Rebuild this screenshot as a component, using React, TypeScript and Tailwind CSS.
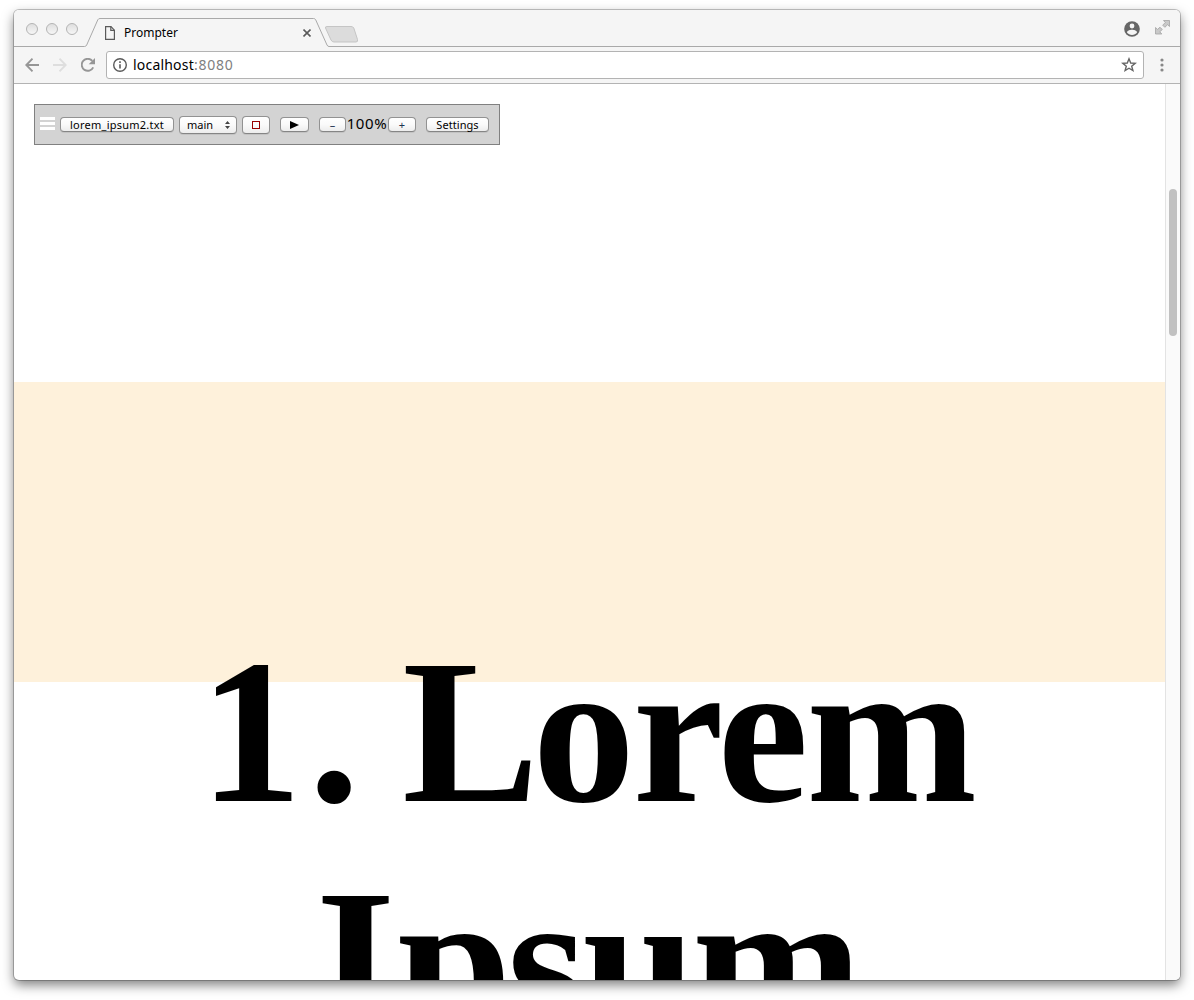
import React from "react";

const MacButton = ({ className, children }: { className: string; children: React.ReactNode }) => (
  <button
    className={`flex shrink-0 items-center justify-center whitespace-nowrap rounded-[4px] border border-[#929292] border-b-[#858585] bg-gradient-to-b from-white via-[#fafafa] to-[#ededed] text-[11px] leading-none text-black shadow-[0_1px_0_rgba(0,0,0,0.08)] ${className}`}
  >
    {children}
  </button>
);

const Light = () => (
  <span className="h-3 w-3 rounded-full border border-[#b4b4b4] bg-gradient-to-b from-[#dfdfdf] to-[#f6f6f6]" />
);

function TabStrip() {
  return (
    <div className="relative flex h-[37px] items-start bg-[#f5f5f5]">
      <svg className="absolute left-0 top-0" width="1166" height="37" viewBox="0 0 1166 37" fill="none">
        <path
          d="M0 36.5H70.500Q72 36.5 72.700 35L83.800 9.800Q84.500 8.500 86 8.500H299.500Q301 8.500 301.700 9.800L313 35Q313.700 36.500 315 36.500H1166"
          stroke="#a9a9a9"
        />
        <path
          d="M313 16.500H337Q339 16.500 339.800 18L343.500 29.500Q344 32 342 32H320Q318 32 317 30L311.500 18Q311 16.500 313 16.500Z"
          fill="#dcdcdc"
          stroke="#c5c5c5"
        />
      </svg>
      <div className="ml-3 mt-[13px] flex gap-2">
        <Light />
        <Light />
        <Light />
      </div>
      <div className="relative ml-[27px] mt-[14px] flex h-[18px] w-[206px] items-center">
        <svg width="10" height="14" viewBox="0 0 10 14" fill="none" stroke="#5a5a5a" strokeWidth="1.2" className="shrink-0">
          <path d="M.6 .6H6L9.400 4.200V13.400H.6Z" />
          <path d="M5.800 .8V4.400H9.400" />
        </svg>
        <span className="ml-[9px] text-[12px] leading-none text-black">Prompter</span>
        <svg className="ml-auto" width="8" height="8" viewBox="0 0 8 8" stroke="#5a5a5a" strokeWidth="1.6">
          <path d="M.5 .5L7.500 7.500M7.500 .5L.5 7.500" />
        </svg>
      </div>
      <div className="ml-auto mr-[10px] mt-[10px] flex items-start">
        <svg className="mt-[1px]" width="16" height="16" viewBox="0 0 16 16">
          <circle cx="8" cy="8" r="7.800" fill="#666" />
          <circle cx="8" cy="5" r="2.400" fill="#f5f5f5" />
          <path d="M3 11.500C3 9.500 6 8.700 8 8.700S13 9.500 13 11.500C12 13 10 14 8 14S4 13 3 11.500Z" fill="#f5f5f5" />
        </svg>
        <svg className="ml-[15px]" width="15" height="15" viewBox="0 0 15 15" fill="#c9c9c9" stroke="#a3a3a3" strokeWidth=".8">
          <path d="M8.500 .5H14.500V6.500L12.600 4.700L9.800 7.300L7.700 5.200L10.300 2.500Z" />
          <path d="M.5 7.500L2.500 9.400L5 7.200L7.300 9.500L4.800 11.800L6.800 14H.5Z" />
        </svg>
      </div>
    </div>
  );
}

function AddressBar() {
  return (
    <div className="flex h-[37px] items-center border-b border-[#b3b3b3] bg-[#f5f5f5] pl-[11px] pr-[16px]">
      <svg width="14" height="14" viewBox="0 0 14 14" fill="none" stroke="#969696" strokeWidth="1.900">
        <path d="M14 7H1.500M7.500 .7L1.300 7L7.500 13.300" />
      </svg>
      <svg className="ml-[14px]" width="14" height="14" viewBox="0 0 14 14" fill="none" stroke="#dedede" strokeWidth="1.900">
        <path d="M0 7H12.500M6.500 .7L12.700 7L6.500 13.300" />
      </svg>
      <svg className="ml-[14px]" width="14" height="14" viewBox="0 0 14 14" fill="none">
        <path d="M12.200 9.300A6 6 0 1 1 11.300 2.900" stroke="#969696" strokeWidth="1.900" />
        <path d="M14 0V6.300H7.700Z" fill="#969696" />
      </svg>
      <div className="ml-[11px] flex h-7 w-[1038px] items-center rounded-[3px] border border-[#b3b3b3] bg-white px-[6px]">
        <svg width="14" height="14" viewBox="0 0 14 14" fill="none">
          <circle cx="7" cy="7" r="6.300" stroke="#5a5a5a" strokeWidth="1.400" />
          <path d="M7 6.200V10.500M7 3.300V4.900" stroke="#5a5a5a" strokeWidth="1.600" />
        </svg>
        <span className="ml-[6px] text-[14px] leading-none tracking-[0.2px] text-black">
          localhost<span className="tracking-[0.75px] text-[#808080]">:8080</span>
        </span>
        <svg className="ml-auto" width="16" height="16" viewBox="0 0 16 16" fill="none" stroke="#666" strokeWidth="1.400">
          <path d="M8 1.800L9.700 6L14.200 6.300L10.700 9.200L11.900 13.600L8 11.200L4.100 13.600L5.300 9.200L1.800 6.300L6.300 6Z" />
        </svg>
      </div>
      <svg className="ml-auto" width="4" height="14" viewBox="0 0 4 14" fill="#888">
        <circle cx="2" cy="2" r="1.600" />
        <circle cx="2" cy="7" r="1.600" />
        <circle cx="2" cy="12" r="1.600" />
      </svg>
    </div>
  );
}

function PrompterControls() {
  return (
    <div className="ml-5 mt-5 flex h-[41px] w-[466px] items-center border border-[#808080] bg-[#d3d3d3] pl-[5px]">
      <div className="flex w-[15px] shrink-0 flex-col gap-[2px] pb-[2px]">
        <span className="h-[3px] bg-white" />
        <span className="h-[3px] bg-white" />
        <span className="h-[3px] bg-white" />
      </div>
      <MacButton className="ml-[5px] h-[15px] w-[114px] tracking-[0.24px]">lorem_ipsum2.txt</MacButton>
      <MacButton className="ml-[5px] h-[18px] w-[58px] pl-px">
        <span>main</span>
        <svg className="ml-3" width="5" height="8" viewBox="0 0 5 8" fill="#444">
          <path d="M2.500 0L5 3H0ZM2.500 8L5 5H0Z" />
        </svg>
      </MacButton>
      <MacButton className="ml-[5px] h-[18px] w-[28px]">
        <span className="h-2 w-2 border border-[#980000]" />
      </MacButton>
      <MacButton className="ml-[10px] h-[15px] w-[29px]">
        <svg width="9" height="8" viewBox="0 0 9 8">
          <path d="M0 0L9 4L0 8Z" />
        </svg>
      </MacButton>
      <MacButton className="ml-[10px] h-[15px] w-[27px]">
        <span className="text-[#1d3550]">–</span>
      </MacButton>
      <span className="flex w-[42px] shrink-0 justify-center pb-0.5 text-[15px] leading-none tracking-[0.6px]">100%</span>
      <MacButton className="h-[15px] w-[28px]">
        <span className="text-[#1d3550]">+</span>
      </MacButton>
      <MacButton className="ml-[10px] h-[15px] w-[63px] tracking-[0.05px]">Settings</MacButton>
    </div>
  );
}

export default function App() {
  return (
    <div className="h-[1000px] w-[1194px] overflow-hidden bg-white pl-[14px] pt-[10px] font-['Noto_Sans',sans-serif]">
      <div className="flex h-[970px] w-[1166px] flex-col overflow-hidden rounded-[5px] bg-white shadow-[0_0_0_1px_rgba(0,0,0,0.22),0_5px_12px_rgba(0,0,0,0.5)]">
        <TabStrip />
        <AddressBar />
        <div className="flex min-h-0 flex-1">
          <main className="w-[1151px] overflow-hidden">
            <PrompterControls />
            <div className="mt-[237px] h-[300px] bg-[#fef1db]" />
            <h1 className="relative -mt-[65px] pr-[5px] text-center font-['Liberation_Serif',serif] text-[205px] font-bold leading-[230px] tracking-[-2.4px] text-black">
              <span className="tracking-[6.6px]">1</span>
              <span className="tracking-[-6.4px]">.</span> <span className="tracking-[-6.4px]">L</span>orem
              <br />
              <span className="tracking-[2px]">I</span>
              <span className="tracking-[-4.4px]">psum</span>
            </h1>
          </main>
          <div className="flex w-[15px] justify-center border-l border-[#e3e3e3] bg-[#fafafa] pt-[105px]">
            <span className="h-[147px] w-2 rounded-full bg-[#c1c1c1]" />
          </div>
        </div>
      </div>
    </div>
  );
}
